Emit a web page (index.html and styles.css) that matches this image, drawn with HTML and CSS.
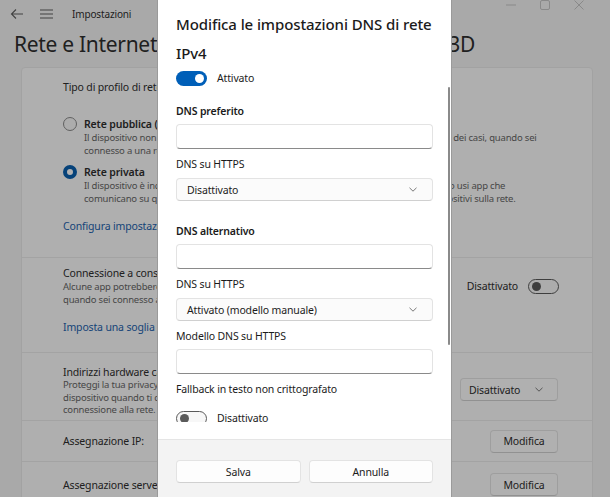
FILE: index.html
```html
<!DOCTYPE html>
<html lang="it">
<head>
<meta charset="utf-8">
<title>Impostazioni</title>
<link rel="stylesheet" href="styles.css">
</head>
<body>
<div class="app">
  <header class="titlebar">
    <span class="tb-icon">
      <svg width="14" height="12" viewBox="0 0 14 12"><path d="M13 6H1.5M6 1.5L1.5 6L6 10.5" fill="none" stroke="#5f5f5f" stroke-width="1.1"/></svg>
    </span>
    <span class="tb-icon">
      <svg width="13" height="10" viewBox="0 0 13 10"><path d="M0 1H13M0 5H13M0 9H13" fill="none" stroke="#5f5f5f" stroke-width="1.1"/></svg>
    </span>
    <span class="app-name">Impostazioni</span>
    <div class="win-controls">
      <svg width="10" height="10" viewBox="0 0 10 10"><path d="M0 5H10" stroke="#c4c4c4" stroke-width="1"/></svg>
      <svg width="10" height="10" viewBox="0 0 10 10"><rect x="0.5" y="0.5" width="9" height="9" rx="1.5" fill="none" stroke="#c4c4c4" stroke-width="1"/></svg>
      <svg width="10" height="10" viewBox="0 0 10 10"><path d="M0.5 0.5L9.5 9.5M9.5 0.5L0.5 9.5" stroke="#c4c4c4" stroke-width="1"/></svg>
    </div>
  </header>

  <h1 class="page-title"><span>Rete e Internet</span><span class="crumb-sep">›</span><span class="crumb-current">Ethernet 3D</span></h1>

  <section class="card">
    <div class="profile">
      <div class="section-label">Tipo di profilo di rete</div>
      <div class="radio-row">
        <span class="radio"></span>
        <div class="radio-text">
          <div class="opt-title">Rete pubblica (consigliata)</div>
          <div class="opt-desc">Il dispositivo non sarà individuabile nella rete. Usa questa opzione nella maggior parte dei casi, quando sei<br>connesso a una rete a casa, al lavoro o in un luogo pubblico.</div>
        </div>
      </div>
      <div class="radio-row">
        <span class="radio checked"></span>
        <div class="radio-text">
          <div class="opt-title">Rete privata</div>
          <div class="opt-desc">Il dispositivo è individuabile in rete. Seleziona questa opzione se devi condividere i file o usi app che<br>comunicano su questa rete. Devi conoscere e considerare affidabili le persone e i dispositivi sulla rete.</div>
        </div>
      </div>
      <a class="link profile-link">Configura impostazioni di firewall e sicurezza</a>
    </div>

    <div class="setting metered">
      <div class="setting-main">
        <div class="setting-text">
          <div class="setting-title">Connessione a consumo</div>
          <div class="setting-desc">Alcune app potrebbero funzionare in modo diverso per ridurre l'utilizzo<br>quando sei connesso a questa rete</div>
        </div>
        <div class="toggle-group">
          <span class="toggle-label">Disattivato</span>
          <span class="toggle off"><span class="knob"></span></span>
        </div>
      </div>
      <a class="link metered-link">Imposta una soglia dati per controllare l'utilizzo in questa rete</a>
    </div>

    <div class="setting hardware">
      <div class="setting-text">
        <div class="setting-title">Indirizzi hardware casuali</div>
        <div class="setting-desc">Proteggi la tua privacy rendendo più difficile tracciare il<br>dispositivo quando ti connetti a questa rete. Si applica alla<br>connessione alla rete.</div>
      </div>
      <div class="select bg-select">
        <span>Disattivato</span>
        <svg width="8" height="5" viewBox="0 0 8 5"><path d="M0.5 0.8L4 4.2L7.5 0.8" fill="none" stroke="#6a6a6a" stroke-width="0.9"/></svg>
      </div>
    </div>

    <div class="setting simple">
      <div class="setting-title">Assegnazione IP:</div>
      <button class="btn bg-btn">Modifica</button>
    </div>
    <div class="setting simple last">
      <div class="setting-title">Assegnazione server DNS:</div>
      <button class="btn bg-btn">Modifica</button>
    </div>
  </section>
</div>

<div class="scrim"></div>

<div class="dialog">
  <div class="dialog-scroll">
    <h2 class="dialog-title">Modifica le impostazioni DNS di rete</h2>
    <h3 class="dialog-subtitle">IPv4</h3>
    <div class="toggle-row ipv4-toggle">
      <span class="toggle on"><span class="knob"></span></span>
      <span class="toggle-text">Attivato</span>
    </div>

    <div class="field-label strong first-group">DNS preferito</div>
    <div class="textbox"></div>
    <div class="field-label">DNS su HTTPS</div>
    <div class="select dlg-select">
      <span>Disattivato</span>
      <svg width="8" height="5" viewBox="0 0 8 5"><path d="M0.5 0.8L4 4.2L7.5 0.8" fill="none" stroke="#6a6a6a" stroke-width="0.9"/></svg>
    </div>

    <div class="field-label strong group">DNS alternativo</div>
    <div class="textbox"></div>
    <div class="field-label">DNS su HTTPS</div>
    <div class="select dlg-select">
      <span>Attivato (modello manuale)</span>
      <svg width="8" height="5" viewBox="0 0 8 5"><path d="M0.5 0.8L4 4.2L7.5 0.8" fill="none" stroke="#6a6a6a" stroke-width="0.9"/></svg>
    </div>
    <div class="field-label">Modello DNS su HTTPS</div>
    <div class="textbox"></div>
    <div class="field-label">Fallback in testo non crittografato</div>
    <div class="toggle-row fallback-toggle">
      <span class="toggle off"><span class="knob"></span></span>
      <span class="toggle-text">Disattivato</span>
    </div>
    <span class="scroll-thumb"></span>
  </div>
  <div class="dialog-gap"></div>
  <div class="dialog-footer">
    <button class="btn dlg-btn">Salva</button>
    <button class="btn dlg-btn">Annulla</button>
  </div>
</div>
</body>
</html>
```

FILE: styles.css
```css
* { box-sizing: border-box; }

html, body {
  margin: 0;
  padding: 0;
  width: 610px;
  height: 497px;
  overflow: hidden;
}

body {
  position: relative;
  font-family: "Noto Sans", "Open Sans", sans-serif;
  font-size: 10.5px;
  letter-spacing: -0.15px;
  color: #1b1b1b;
  background: #f3f3f3;
}

/* ---------- background settings window ---------- */
.app {
  height: 497px;
  padding: 0 17px 0 14px;
  background: #f3f3f3;
  color: #2e2e2e;
}

.titlebar {
  height: 27px;
  display: flex;
  align-items: center;
}

.tb-icon {
  width: 30px;
  display: flex;
  align-items: center;
  justify-content: flex-start;
}
.tb-icon:first-child { margin-left: -4px; }

.app-name {
  font-size: 10px;
  margin-left: 2px;
}

.win-controls {
  margin-left: auto;
  align-self: flex-start;
  display: flex;
  gap: 24px;
  margin-right: 9px;
}

.page-title {
  margin: 3px 0 9px;
  width: 461px;
  display: flex;
  font-size: 21px;
  line-height: 28px;
  font-weight: 400;
  letter-spacing: -0.3px;
  white-space: nowrap;
}
.crumb-sep { padding: 0 10px; }
.crumb-current { margin-left: auto; }

.card {
  margin-left: 7px;
  width: 572px;
  background: #fbfbfb;
  border: 1px solid #e8e8e8;
  border-radius: 4px;
}

.profile {
  height: 190px;
  padding: 11px 34px 0 41px;
  border-bottom: 1px solid #eaeaea;
}

.section-label { line-height: 16px; }

.radio-row {
  display: flex;
  align-items: flex-start;
  gap: 7px;
  margin-top: 22px;
  white-space: nowrap;
}
.radio-row + .radio-row { margin-top: 8px; }

.radio {
  flex: none;
  width: 14px;
  height: 14px;
  border-radius: 50%;
  border: 1px solid #8a8a8a;
  background: #f6f6f6;
}
.radio.checked {
  border: 4px solid #0a5fae;
  background: #ffffff;
}

.opt-title {
  font-weight: 600;
  line-height: 14px;
}
.opt-desc {
  color: #666666;
  font-size: 9.5px;
  letter-spacing: -0.2px;
  line-height: 13px;
}

.link {
  display: block;
  color: #1c62ad;
  line-height: 16px;
  white-space: nowrap;
}
.profile-link { margin-top: 13px; }

.setting {
  padding: 0 34px 0 41px;
  border-bottom: 1px solid #eaeaea;
}

.metered {
  height: 95px;
  padding-top: 8px;
}
.setting-main {
  display: flex;
  align-items: center;
  justify-content: space-between;
}
.setting-title { line-height: 14px; white-space: nowrap; }
.setting-desc {
  color: #666666;
  font-size: 9.5px;
  letter-spacing: -0.2px;
  line-height: 13px;
  white-space: nowrap;
}
.metered-link { margin-top: 13px; }

.toggle-group {
  display: flex;
  align-items: center;
  gap: 10px;
  margin-right: -1px;
}

.toggle {
  display: inline-flex;
  align-items: center;
  width: 31px;
  height: 15px;
  border-radius: 8px;
  flex: none;
}
.toggle.off {
  border: 1px solid #5a5a5a;
  background: #f7f7f7;
  padding-left: 3px;
}
.toggle.off .knob {
  width: 9px;
  height: 9px;
  border-radius: 50%;
  background: #5a5a5a;
}
.toggle.on {
  background: #005fb8;
  justify-content: flex-end;
  padding-right: 3px;
}
.toggle.on .knob {
  width: 9px;
  height: 9px;
  border-radius: 50%;
  background: #ffffff;
}

.hardware {
  height: 68px;
  padding-top: 12px;
  display: flex;
  justify-content: space-between;
  align-items: flex-start;
}
.hardware .setting-desc { line-height: 12.5px; }

.select {
  display: flex;
  align-items: center;
  justify-content: space-between;
  background: #fdfdfd;
  border: 1px solid #e3e3e3;
  border-bottom-color: #d0d0d0;
  border-radius: 4px;
  white-space: nowrap;
}
.bg-select {
  width: 98px;
  height: 23px;
  padding: 0 14px 0 8px;
  margin-top: 13px;
}

.simple {
  height: 41px;
  display: flex;
  align-items: center;
  justify-content: space-between;
}
.simple.last { border-bottom: none; height: 45px; }

.btn {
  font-family: inherit;
  font-size: 10.5px;
  letter-spacing: -0.15px;
  color: #1b1b1b;
  background: #fdfdfd;
  border: 1px solid #e3e3e3;
  border-bottom-color: #d0d0d0;
  border-radius: 4px;
  padding: 0;
}
.bg-btn {
  width: 68px;
  height: 23px;
  color: #2e2e2e;
}

/* ---------- scrim ---------- */
.scrim {
  position: absolute;
  inset: 0;
  background: rgba(0, 0, 0, 0.3);
}

/* ---------- dialog ---------- */
.dialog {
  position: absolute;
  left: 157px;
  top: 0;
  width: 295px;
  height: 497px;
  background: #ffffff;
  border-left: 1px solid #9a9a9a;
  border-right: 1px solid #9a9a9a;
  display: flex;
  flex-direction: column;
}

.dialog-scroll {
  position: relative;
  height: 422px;
  overflow: hidden;
  padding: 14px 18px 0 18px;
  flex: none;
}

.dialog-title {
  margin: 0;
  font-size: 15px;
  line-height: 20px;
  font-weight: 500;
  letter-spacing: -0.1px;
  white-space: nowrap;
}
.dialog-subtitle {
  margin: 9px 0 0;
  font-size: 15px;
  line-height: 20px;
  font-weight: 500;
}

.toggle-row {
  display: flex;
  align-items: center;
  gap: 10px;
}
.ipv4-toggle { margin-top: 8px; }
.fallback-toggle { margin-top: 14px; }
.toggle-text { line-height: 15px; }

.field-label {
  line-height: 16px;
  margin-top: 7px;
  white-space: nowrap;
}
.field-label.strong { font-weight: 600; }
.field-label.first-group { margin-top: 17px; }
.field-label.group { margin-top: 22px; }

.textbox {
  height: 25px;
  margin-top: 5px;
  background: #ffffff;
  border: 1px solid #e3e3e3;
  border-bottom: 1px solid #8a8a8a;
  border-radius: 4px;
}

.dlg-select {
  height: 23px;
  margin-top: 6px;
  padding: 0 15px 0 10px;
  background: #fbfbfb;
}

.scroll-thumb {
  position: absolute;
  right: 1px;
  top: 87px;
  width: 2px;
  height: 258px;
  border-radius: 1px;
  background: #8a8a8a;
}

.dialog-gap { height: 17px; flex: none; }

.dialog-footer {
  flex: 1;
  background: #f3f3f3;
  border-top: 1px solid #e5e5e5;
  display: grid;
  grid-template-columns: 1fr 1fr;
  column-gap: 8px;
  align-content: start;
  padding: 20px 18px 0 18px;
}
.dlg-btn {
  height: 23px;
}
```
